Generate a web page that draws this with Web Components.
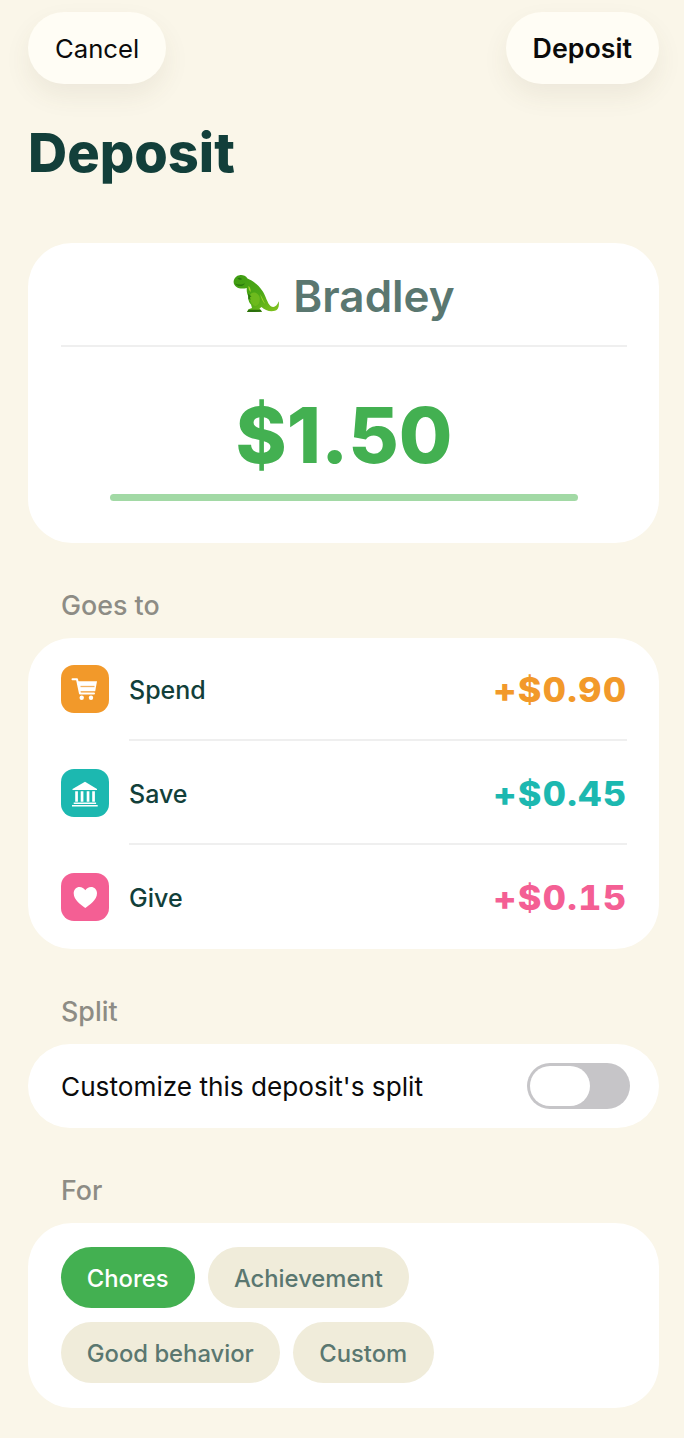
<!DOCTYPE html>
<html lang="en">
<head>
<meta charset="utf-8">
<title>Deposit</title>
<style>
    html, body { margin: 0; padding: 0; background: #faf6e9; }
    body { font-family: Inter, "Liberation Sans", sans-serif; width: 684px; height: 1438px; overflow: hidden; }
</style>
</head>
<body>
<deposit-screen>
    <nav-bar slot="nav">
        <nav-button slot="left">Cancel</nav-button>
        <nav-button slot="right" strong>Deposit</nav-button>
    </nav-bar>
    <screen-title slot="title">Deposit</screen-title>
    <kid-card slot="kid" name="Bradley" amount="$1.50"></kid-card>

    <section-block label="Goes to">
        <white-card>
            <split-row icon="cart" color="#f2992a" name="Spend" amount="+$0.90"></split-row>
            <split-row icon="bank" color="#1cb8b0" name="Save" amount="+$0.45"></split-row>
            <split-row icon="heart" color="#f45f94" name="Give" amount="+$0.15" last></split-row>
        </white-card>
    </section-block>

    <section-block label="Split">
        <toggle-row>Customize this deposit's split</toggle-row>
    </section-block>

    <section-block label="For">
        <chip-group>
            <reason-chip selected>Chores</reason-chip>
            <reason-chip>Achievement</reason-chip>
            <reason-chip>Good behavior</reason-chip>
            <reason-chip>Custom</reason-chip>
        </chip-group>
    </section-block>
</deposit-screen>

<script>
class DepositScreen extends HTMLElement {
    constructor() {
        super();
        this.attachShadow({ mode: 'open' });
        this.shadowRoot.innerHTML = `
            <style>
                :host {
                    display: block;
                    box-sizing: border-box;
                    padding: 12px 25px 0 28px;
                    color: #123f3a;
                }
            </style>
            <slot name="nav"></slot>
            <slot name="title"></slot>
            <slot name="kid"></slot>
            <slot></slot>
        `;
    }
}

class NavBar extends HTMLElement {
    constructor() {
        super();
        this.attachShadow({ mode: 'open' });
        this.shadowRoot.innerHTML = `
            <style>
                :host {
                    display: flex;
                    justify-content: space-between;
                }
            </style>
            <slot name="left"></slot>
            <slot name="right"></slot>
        `;
    }
}

class NavButton extends HTMLElement {
    constructor() {
        super();
        this.attachShadow({ mode: 'open' });
        this.shadowRoot.innerHTML = `
            <style>
                :host {
                    display: flex;
                    align-items: center;
                    height: 72px;
                    padding: 0 27px;
                    border-radius: 36px;
                    background: #fffdf5;
                    box-shadow: 0 12px 26px rgba(90, 80, 50, 0.08);
                    font-size: 25.7px;
                    color: #0b0b0b;
                }
                :host([strong]) { font-weight: 600; font-size: 26.8px; }
            </style>
            <slot></slot>
        `;
    }
}

class ScreenTitle extends HTMLElement {
    constructor() {
        super();
        this.attachShadow({ mode: 'open' });
        this.shadowRoot.innerHTML = `
            <style>
                :host {
                    display: block;
                    height: 159px;
                    padding-top: 36px;
                    box-sizing: border-box;
                    font-size: 54.2px;
                    line-height: 64px;
                    font-weight: 800;
                    color: #123f3a;
                }
            </style>
            <slot></slot>
        `;
    }
}

class KidCard extends HTMLElement {
    constructor() {
        super();
        this.attachShadow({ mode: 'open' });
    }

    connectedCallback() {
        const name = this.getAttribute('name');
        const amount = this.getAttribute('amount');
        this.shadowRoot.innerHTML = `
            <style>
                :host {
                    display: block;
                    box-sizing: border-box;
                    height: 300px;
                    padding: 0 32px 0 33px;
                    border-radius: 44px;
                    background: #fff;
                }
                .name {
                    height: 104px;
                    padding-top: 3px;
                    display: flex;
                    align-items: center;
                    justify-content: center;
                    gap: 13px;
                    border-bottom: 2px solid #efefef;
                    box-sizing: border-box;
                    font-size: 44px;
                    font-weight: 600;
                    color: #5a7770;
                }
                .amount {
                    margin-top: 42px;
                    height: 92px;
                    line-height: 92px;
                    text-align: center;
                    font-size: 77.6px;
                    font-weight: 800;
                    color: #43b051;
                }
                .bar {
                    margin: 13px 49px 0;
                    height: 7px;
                    border-radius: 4px;
                    background: #a2d9a5;
                }
                svg { margin-top: -4px; }
            </style>
            <div class="name">
                <svg width="47" height="40" viewBox="0 0 47 40">
                    <defs>
                        <linearGradient id="rex" x1="0" y1="0" x2="1" y2="1">
                            <stop offset="0" stop-color="#3e9c12"/>
                            <stop offset="0.55" stop-color="#4ea916"/>
                            <stop offset="1" stop-color="#86c41f"/>
                        </linearGradient>
                    </defs>
                    <path fill="url(#rex)" d="M0.700 7 C1.200 4 3.500 1.500 6.500 1.200 C9.500 0.700 12.500 1.500 14.500 4.500 C19 6.500 25.500 10.500 29.500 17 C33 22.500 34.500 29.500 37.500 32 C40.500 34 43.800 33 45.700 27.300 C46.500 32 45.200 35.800 42 36.800 C37 38 32 36.500 28.500 33 L26.500 34.500 L29 37.800 L14 38 L15.500 35.300 L19 34 L18 30.500 C16 28.500 15 25.500 15.500 22.800 C14 20 13.500 17.500 13.800 14 C10.500 14.800 6 15 3.500 13 C1.500 11.500 0.300 9.300 0.700 7 Z"/>
                    <path fill="#6dba1d" d="M17 21 C19 17 25 18 26.500 23 C27.500 27 26 31 22.500 32 C19 32 16 26 17 21 Z"/>
                    <path fill="#a3d52c" d="M27 20 C29 23 30 26 32 29.500 C30.500 29 28.500 25 27 20 Z M15.500 12 C17 13 18 15.500 17.500 18 C16 16.500 15.300 14.500 15.500 12 Z"/>
                    <path fill="#2a7a0c" d="M4.500 4.200 C6 3.200 8 3.700 9 5.200 C7 6.200 5.500 5.700 4.500 4.200 Z M1.800 9.500 C5 11 9 11 12 9.200 C10 12.800 5 13.200 1.800 9.500 Z M15 19.500 L18.500 22.500 L17 23 L17.500 26 L16 24.500 L15.300 26 Z"/>
                    <path fill="#2b6f0c" d="M15.500 35.800 L27.500 35.800 L29 37.800 L14 38 Z"/>
                </svg>
                <span>${name}</span>
            </div>
            <div class="amount">${amount}</div>
            <div class="bar"></div>
        `;
    }
}

class SectionBlock extends HTMLElement {
    constructor() {
        super();
        this.attachShadow({ mode: 'open' });
    }

    connectedCallback() {
        this.shadowRoot.innerHTML = `
            <style>
                :host { display: block; }
                .label {
                    margin-top: 46px;
                    margin-bottom: 17px;
                    padding-left: 33px;
                    height: 32px;
                    line-height: 32px;
                    font-size: 26.8px;
                    font-weight: 500;
                    color: #8d8c85;
                }
            </style>
            <div class="label">${this.getAttribute('label')}</div>
            <slot></slot>
        `;
    }
}

class WhiteCard extends HTMLElement {
    constructor() {
        super();
        this.attachShadow({ mode: 'open' });
        this.shadowRoot.innerHTML = `
            <style>
                :host {
                    display: block;
                    box-sizing: border-box;
                    height: 311px;
                    padding-left: 33px;
                    border-radius: 44px;
                    background: #fff;
                }
            </style>
            <slot></slot>
        `;
    }
}

const ICONS = {
    cart: `<path d="M11.500 14.300 H16 L19 28.500 H33" fill="none" stroke="#fff" stroke-width="2" stroke-linecap="round" stroke-linejoin="round"/>
           <path d="M16.800 16.200 H36 L34.200 26.300 H18.800 Z" fill="#fff"/>
           <path d="M19.500 21.500 H33.500" stroke="#f2992a" stroke-width="1.300" opacity="0.75"/>
           <circle cx="20.700" cy="32.700" r="2.200" fill="#fff"/><circle cx="30" cy="32.700" r="2.200" fill="#fff"/>`,
    bank: `<path d="M24 12.700 L36 20 V21 H11.500 V20 Z" fill="#fff"/>
           <path d="M14.200 22.200 h2.700 v10.500 h-2.700 Z M19.700 22.200 h2.700 v10.500 h-2.700 Z M25.700 22.200 h2.700 v10.500 h-2.700 Z M31.200 22.200 h2.700 v10.500 h-2.700 Z" fill="#fff"/>
           <path d="M12.700 33.400 h22.400 v1.600 H12.700 Z M11 36 h25.700 v1.500 H11 Z" fill="#fff"/>`,
    heart: `<path d="M24.300 35 C20 31.800 12.700 27 12.700 20.200 C12.700 16.600 15.300 14 18.500 14 C21 14 23.200 15.300 24.300 17.300 C25.400 15.300 27.600 14 30.100 14 C33.300 14 36 16.600 36 20.200 C36 27 28.600 31.800 24.300 35 Z" fill="#fff"/>`
};

class SplitRow extends HTMLElement {
    constructor() {
        super();
        this.attachShadow({ mode: 'open' });
    }

    connectedCallback() {
        const color = this.getAttribute('color');
        this.shadowRoot.innerHTML = `
            <style>
                :host {
                    display: flex;
                    align-items: center;
                    height: 104px;
                }
                .icon {
                    flex: none;
                    width: 48px;
                    height: 48px;
                    border-radius: 13px;
                    background: ${color};
                    margin-right: 20px;
                    margin-top: -2px;
                }
                svg { display: block; }
                .body {
                    flex: 1;
                    height: 103px;
                    align-self: flex-start;
                    padding-top: 3px;
                    display: flex;
                    align-items: center;
                    justify-content: space-between;
                    box-sizing: border-box;
                    margin-right: 32px;
                    border-bottom: 2px solid #efefef;
                }
                :host([last]) .body { border-bottom-color: transparent; }
                .name {
                    font-size: 25px;
                    font-weight: 500;
                    color: #123f3a;
                }
                /* digits in the reference are wider than Inter's */
                .amount {
                    font-size: 33.5px;
                    font-weight: 800;
                    font-variant-numeric: tabular-nums;
                    letter-spacing: 1.3px;
                    color: ${color};
                    transform: scaleX(1.07);
                    transform-origin: right center;
                }
            </style>
            <div class="icon">
                <svg width="48" height="48" viewBox="0 0 48 48">${ICONS[this.getAttribute('icon')]}</svg>
            </div>
            <div class="body">
                <span class="name">${this.getAttribute('name')}</span>
                <span class="amount">${this.getAttribute('amount')}</span>
            </div>
        `;
    }
}

class ToggleRow extends HTMLElement {
    constructor() {
        super();
        this.attachShadow({ mode: 'open' });
        this.shadowRoot.innerHTML = `
            <style>
                :host {
                    display: flex;
                    align-items: center;
                    justify-content: space-between;
                    box-sizing: border-box;
                    height: 84px;
                    padding: 0 29px 0 33px;
                    border-radius: 42px;
                    background: #fff;
                    font-size: 26.2px;
                    color: #0b0b0b;
                }
                .track {
                    box-sizing: border-box;
                    width: 103px;
                    height: 46px;
                    padding: 3px;
                    border-radius: 23px;
                    background: #c6c5c8;
                }
                .knob {
                    width: 60px;
                    height: 40px;
                    border-radius: 20px;
                    background: #fff;
                }
            </style>
            <span><slot></slot></span>
            <div class="track"><div class="knob"></div></div>
        `;
    }
}

class ChipGroup extends HTMLElement {
    constructor() {
        super();
        this.attachShadow({ mode: 'open' });
        this.shadowRoot.innerHTML = `
            <style>
                :host {
                    display: flex;
                    flex-wrap: wrap;
                    align-content: flex-start;
                    gap: 14px 13px;
                    box-sizing: border-box;
                    height: 185px;
                    padding: 24px 180px 0 33px;
                    border-radius: 44px;
                    background: #fff;
                }
            </style>
            <slot></slot>
        `;
    }
}

class ReasonChip extends HTMLElement {
    constructor() {
        super();
        this.attachShadow({ mode: 'open' });
        this.shadowRoot.innerHTML = `
            <style>
                :host {
                    display: flex;
                    align-items: center;
                    box-sizing: border-box;
                    height: 61px;
                    padding: 1px 26.6px 0 25.8px;
                    border-radius: 30.5px;
                    background: #f0ecda;
                    font-size: 23.8px;
                    font-weight: 500;
                    color: #5a7770;
                }
                :host([selected]) {
                    background: #43b051;
                    color: #fff;
                }
            </style>
            <slot></slot>
        `;
    }
}

customElements.define('deposit-screen', DepositScreen);
customElements.define('nav-bar', NavBar);
customElements.define('nav-button', NavButton);
customElements.define('screen-title', ScreenTitle);
customElements.define('kid-card', KidCard);
customElements.define('section-block', SectionBlock);
customElements.define('white-card', WhiteCard);
customElements.define('split-row', SplitRow);
customElements.define('toggle-row', ToggleRow);
customElements.define('chip-group', ChipGroup);
customElements.define('reason-chip', ReasonChip);
</script>
</body>
</html>
